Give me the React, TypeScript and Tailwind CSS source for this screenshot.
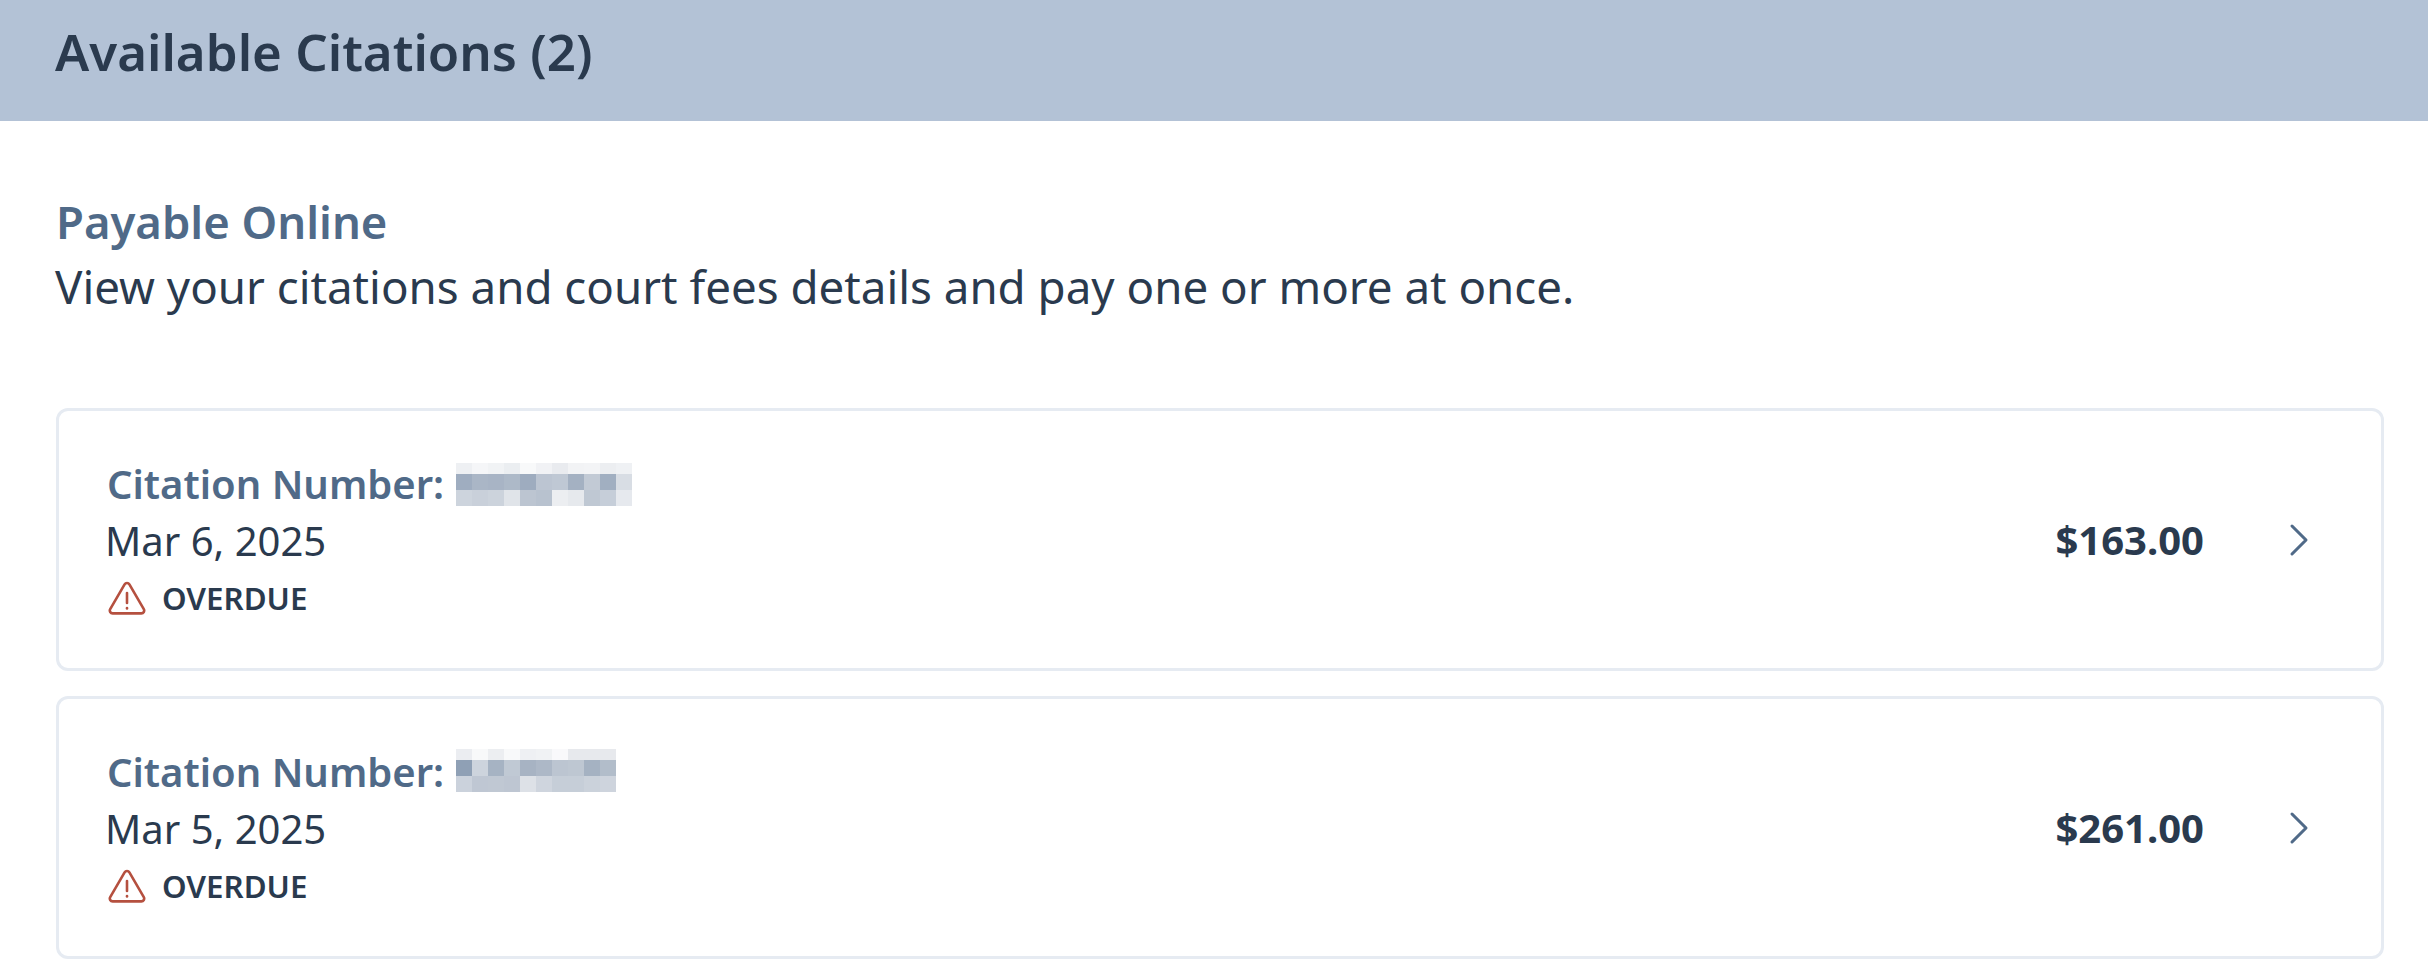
import { ChevronRight } from "lucide-react";

interface Citation {
  date: string;
  amount: string;
  blur: string[][];
  blurTop: string;
}

const citations: Citation[] = [
  {
    date: "Mar 6, 2025",
    amount: "$163.00",
    blurTop: "mt-0",
    blur: [
      ["#eef0f3", "#f5f6f8", "#f1f3f5", "#ebeef1", "#f8f9fa", "#f1f2f5", "#e9ebef", "#f2f3f5", "#f3f4f6", "#eceef1", "#eff1f4"],
      ["#9fadc0", "#aab6c6", "#a8b4c5", "#adb9c8", "#9eacbf", "#bcc5d2", "#bfc8d4", "#a4b1c2", "#c2cad5", "#a1afc1", "#d8dde4"],
      ["#cdd4dd", "#c9d0da", "#ccd3dc", "#e0e4e9", "#bcc5d1", "#b8c2cf", "#eceef1", "#e6e9ed", "#bfc8d3", "#c6ced9", "#e6e9ee"],
    ],
  },
  {
    date: "Mar 5, 2025",
    amount: "$261.00",
    blurTop: "mt-[-3px]",
    blur: [
      ["#ebedf1", "#f8f9fa", "#eceef1", "#f8f9fa", "#eef0f3", "#f0f2f4", "#f9f9fb", "#e7e9ed", "#e7e9ed", "#e7e9ed"],
      ["#8fa0b5", "#cdd4dd", "#a6b3c3", "#c0c9d4", "#a7b3c3", "#adb8c7", "#bcc5d1", "#bec7d2", "#a5b2c2", "#b2bdca"],
      ["#cbd2dc", "#bfc7d3", "#c0c8d3", "#bec6d2", "#dde1e7", "#cfd5de", "#c6ced8", "#c6ced8", "#cbd2db", "#ced4dd"],
    ],
  },
];

function WarningIcon() {
  return (
    <svg width="38" height="34" viewBox="0 0 38 34" fill="none" stroke="#b5503f" strokeWidth="2.6" strokeLinecap="round" strokeLinejoin="round">
      <path d="M16.6 3.4 2.2 28.2A2.8 2.8 0 0 0 4.6 32.4h28.8a2.8 2.8 0 0 0 2.4-4.2L21.4 3.4a2.8 2.8 0 0 0-4.8 0Z" />
      <path d="M19 12v10" />
      <path d="M19 27v.4" />
    </svg>
  );
}

function Mosaic({ rows, top }: { rows: string[][]; top: string }) {
  const heights = ["h-[11px]", "h-4", "h-4"];
  return (
    <span className={`inline-flex flex-col ml-[12px] ${top}`}>
      {rows.map((row, i) => (
        <span key={i} className={`flex ${heights[i]}`}>
          {row.map((color, j) => (
            <span key={j} className="w-4 h-full" style={{ backgroundColor: color }} />
          ))}
        </span>
      ))}
    </span>
  );
}

function CitationCard({ citation }: { citation: Citation }) {
  return (
    <div className="h-[263px] border-[3px] border-[#e6ebf2] rounded-xl flex items-center justify-between pl-[47px] pr-[54px]">
      <div className="flex flex-col -ml-[1px] pt-[6px]">
        <div className="flex items-center h-[54px] pl-[2px] text-[40px] font-semibold text-[#506a88] -mt-[3px]">
          <span>Citation Number:</span>
          <Mosaic rows={citation.blur} top={citation.blurTop} />
        </div>
        <div className="h-[60px] leading-[60px] text-[40px] text-[#2a3a4e]">{citation.date}</div>
        <div className="flex items-center gap-[16px] h-[54px] pl-[3px]">
          <WarningIcon />
          <span className="text-[31.3px] font-semibold text-[#2a3a4e]">OVERDUE</span>
        </div>
      </div>
      <div className="flex items-center">
        <span className="text-[40px] font-bold text-[#2a3a4e]">{citation.amount}</span>
        <ChevronRight className="ml-[67px] w-14 h-14 text-[#506a88]" strokeWidth={1.3} />
      </div>
    </div>
  );
}

export default function App() {
  return (
    <div className="w-[2428px] h-[980px] overflow-hidden bg-white font-['Noto_Sans',sans-serif]">
      <div className="h-[121px] bg-[#b3c2d6] flex items-center pl-[55px] pb-[19px]">
        <h1 className="text-[51px] font-semibold text-[#2a3a4e]">Available Citations (2)</h1>
      </div>
      <div className="px-[56px]">
        <div className="pt-[70px] pb-[93px]">
          <h2 className="text-[45.4px] leading-[60px] font-semibold text-[#506a88]">Payable Online</h2>
          <p className="mt-[6px] text-[45.7px] leading-[58px] text-[#2a3a4e] -ml-[1px]">
            View your citations and court fees details and pay one or more at once.
          </p>
        </div>
        <div className="flex flex-col gap-[25px] w-[2328px]">
          {citations.map((citation) => (
            <CitationCard key={citation.date} citation={citation} />
          ))}
        </div>
      </div>
    </div>
  );
}
